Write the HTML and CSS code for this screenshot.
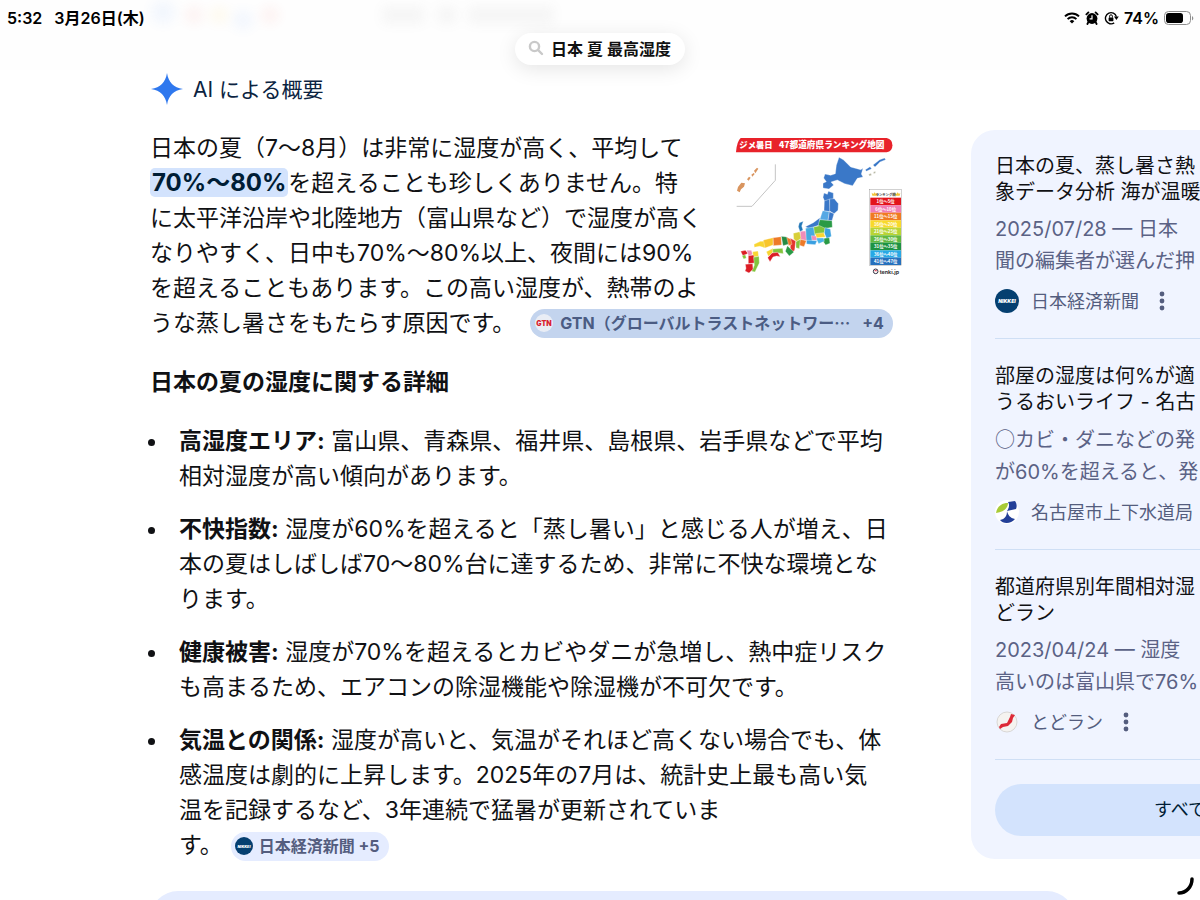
FILE: index.html
```html
<!DOCTYPE html>
<html lang="ja">
<head>
    <meta charset="UTF-8">
    <meta name="viewport" content="width=device-width, initial-scale=1.0">
    <title>日本 夏 最高湿度</title>
    <link rel="stylesheet" href="styles.css">
</head>
<body>
    <header class="topbar">
        <svg class="ghost" viewBox="0 0 600 40" aria-hidden="true">
            <circle cx="163" cy="12" r="12" fill="#4285f4"/>
            <circle cx="194" cy="15" r="9" fill="#ea4335"/>
            <circle cx="219" cy="15" r="9" fill="#fbbc05"/>
            <circle cx="243" cy="20" r="10" fill="#4285f4"/>
            <circle cx="270" cy="15" r="9" fill="#ea4335"/>
            <g fill="#777777">
                <rect x="382" y="6" width="42" height="18"/>
                <rect x="438" y="6" width="18" height="18"/>
                <rect x="468" y="6" width="86" height="18"/>
            </g>
        </svg>
        <div class="status">
            <div class="status-left"><span>5:32</span><span>3月26日(木)</span></div>
            <div class="status-right">
                <svg width="16" height="12" viewBox="0 0 16 12" fill="none" stroke="#000" stroke-width="2">
                    <path d="M1 4.4a10 10 0 0 1 14 0M3.6 7.1a6.2 6.2 0 0 1 8.8 0"/>
                    <path d="M8 11.6 5.7 9.2a3.2 3.2 0 0 1 4.6 0z" fill="#000" stroke="none"/>
                </svg>
                <svg width="14" height="14" viewBox="0 0 14 14">
                    <circle cx="7" cy="7.5" r="5.4"/>
                    <path d="M1.4 3.4 3.4 1.4M10.6 1.4l2 2M3.4 11 2.4 13M10.6 11l1 2" stroke="#000" stroke-width="1.8" stroke-linecap="round"/>
                    <path d="M7 4.2v3.6H4.6" stroke="#fff" stroke-width="1.2" fill="none"/>
                </svg>
                <svg width="15" height="14" viewBox="0 0 15 14" fill="none" stroke="#000" stroke-width="1.4">
                    <path d="M10.2 11.9A5.6 5.6 0 1 1 12.4 5.6"/>
                    <path d="M10 5.6h4.8l-2.4 3.4z" fill="#000" stroke="none"/>
                    <rect x="4.6" y="6.4" width="4.8" height="3.8" rx=".6" fill="#000" stroke="none"/>
                    <path d="M5.6 6.6V5.2a1.4 1.4 0 0 1 2.8 0v1.4" stroke-width="1"/>
                </svg>
                <span>74%</span>
                <svg width="30" height="14" viewBox="0 0 30 14">
                    <rect x=".5" y=".5" width="26" height="13" rx="4" fill="none" stroke="#8e8e8e"/>
                    <rect x="2" y="2" width="17" height="10" rx="2.8"/>
                    <path d="M28 5v4.4c1.8-.8 1.8-3.6 0-4.4z" fill="#8e8e8e"/>
                </svg>
            </div>
        </div>
        <button class="search-pill" type="button">
            <svg width="16" height="16" viewBox="0 0 16 16" fill="none" stroke="#c9c9c9" stroke-width="2.4" stroke-linecap="round">
                <circle cx="6.5" cy="6.5" r="4.6"/>
                <path d="m10.4 10.4 3.6 3.6"/>
            </svg>
            日本 夏 最高湿度
        </button>
    </header>

    <div class="ai-title">
        <svg width="32" height="32" viewBox="0 0 32 32">
            <path d="M16 0c1.6 9.6 6.4 14.4 16 16-9.6 1.6-14.4 6.4-16 16C14.4 22.4 9.6 17.6 0 16 9.6 14.4 14.4 9.6 16 0z" fill="#2f78ee"/>
        </svg>
        <h1>AI による概要</h1>
    </div>

    <div class="layout">
        <main class="answer">
            <svg class="thumb" viewBox="36 24 498 438" role="img" aria-label="都道府県ランキング地図">
                <path d="M50 39H488a22 22 0 0 1 0 43H36q2-32 14-43z" fill="#e8222a"/>
                <g font-family="'Noto Sans CJK JP', sans-serif" font-weight="900" fill="#fff">
                    <text x="46" y="70" font-size="25">ジメ暑日</text>
                    <text x="165" y="70" font-size="26">47都道府県ランキング地図</text>
                </g>
                <path d="M154 118v48l-70 78H38" fill="none" stroke="#c4c4c4" stroke-width="3"/>
                <path d="M42 186l10-13 11 2-3 10-9 8-4 9-8-5zM69 163l6-8 5 3-6 9zM82 149l7-5 3 3-7 8zM90 137l9-9 4 3-9 14z" fill="#d9955f"/>
                <g stroke="#fff" stroke-width="1">
                    <path d="M345 97l13 7 22 22 30 8 7-4-5 17 5 9-17 4-14 22-24-6-22-11-19 6 8 9-14 12-18-3 0-14 10-5-8-11 4-12 17 4 14-5 3-25z" fill="#3a78c8"/>
                    <path d="M424 134l14-9 5 6-16 8zM447 120l20-16 15-5 3 5-17 7-15 15z" fill="#3a78c8"/>
                    <path d="M434 148l7-3 2 6-7 2zM448 141l6-2 1 5-6 2z" fill="#b4b4a0"/>
                    <path d="M300 204l10 4 3-9 15 5 0 18-26 7-5-12z" fill="#3a78c8"/>
                    <path d="M301 228l16-6 1 38-18-2z" fill="#3a78c8"/>
                    <path d="M317 222l14-1 12 15-1 20-12 10-13-8z" fill="#3a78c8"/>
                    <path d="M296 257l20 3-4 27-25-3z" fill="#55a8e4"/>
                    <path d="M316 260l14 6-6 21-12 0z" fill="#3a78c8"/>
                    <path d="M287 284l37 3 1 20-26 4-18-10z" fill="#299a45"/>
                    <path d="M288 278l-5 23-28 10-11-6 24-12z" fill="#3a78c8"/>
                    <path d="M245 310l24-4 5 24-14 24-15-9z" fill="#45aadf"/>
                    <path d="M269 306l18-4 17 8-4 16-28 3z" fill="#82c43c"/>
                    <path d="M303 308l16 4 3 22-14 8-7-18z" fill="#3ba2df"/>
                    <path d="M274 326l25-3 5 13-27 3z" fill="#f8d531"/>
                    <path d="M300 340l16-2 2 17-13 5-8-11z" fill="#299a45"/>
                    <path d="M275 339l24 0 2 10-17 7z" fill="#4bb6e9"/>
                    <path d="M262 332l14 1 3 13-15 0z" fill="#ee8db9"/>
                    <path d="M247 346l32 1-5 12-26-2z" fill="#3a9fe1"/>
                    <path d="M229 319l16-1 2 29-20-4z" fill="#ee8db9"/>
                    <path d="M226 293l12-4-5 14 4 12-9 5-5-15z" fill="#2277b8"/>
                    <path d="M208 325l19-5 4 20-13 10-9-8z" fill="#d8cf3a"/>
                    <path d="M229 343l18 4-7 18-16-5z" fill="#ee7a28"/>
                    <path d="M216 350l13-7-3 28-10-3z" fill="#82c43c"/>
                    <path d="M199 340l16 8-3 28-9 6-4-14z" fill="#e3342e"/>
                    <path d="M172 334l17 2 9 20-21 6z" fill="#258b43"/>
                    <path d="M190 362l13 13 7 6-14 12-12-14z" fill="#299a45"/>
                    <path d="M188 337l12 5 4 16-10 4z" fill="#ee7a28"/>
                    <path d="M147 338l24-3 2 25-25 2z" fill="#ee7a28"/>
                    <path d="M119 345l28-7 0 22-24 9-14-7z" fill="#f8c52b"/>
                    <path d="M90 358l19-9 10 0 4 19-16-4-16 3z" fill="#f8d531"/>
                    <path d="M127 380l20-10 0 12-14 12z" fill="#f8d531"/>
                    <path d="M146 372l30-2 2 16-18-3-13 1z" fill="#82c43c"/>
                    <path d="M131 398l13-14 17-2 8 13-11-2-11 3-9 14z" fill="#dc1c24"/>
                    <path d="M50 379l14-3 8 9-15 8z" fill="#dc1c24"/>
                    <path d="M68 376l14 0 4 12-12 6z" fill="#ee8db9"/>
                    <path d="M86 380l16-2 2 16-17 3z" fill="#f8d531"/>
                    <path d="M73 392l16-2 3 24-19 2z" fill="#dc1c24"/>
                    <path d="M89 397l16-3 1 20-13 27-10-2 8-18z" fill="#82c43c"/>
                    <path d="M64 418l22-2 1 17-12 11-12-6 3-8z" fill="#dc1c24"/>
                    <path d="M54 392l10-3 3 10-8 3z" fill="#82c43c"/>
                </g>
                <rect x="437" y="193" width="96" height="228" fill="#fff" stroke="#777"/>
                <g>
                    <rect x="439" y="218" width="92" height="23" fill="#e3141c"/>
                    <rect x="439" y="241" width="92" height="22" fill="#f07db4"/>
                    <rect x="439" y="263" width="92" height="23" fill="#f07a22"/>
                    <rect x="439" y="286" width="92" height="22" fill="#f8d92b"/>
                    <rect x="439" y="308" width="92" height="23" fill="#b9d435"/>
                    <rect x="439" y="331" width="92" height="22" fill="#62b840"/>
                    <rect x="439" y="353" width="92" height="23" fill="#1d9343"/>
                    <rect x="439" y="376" width="92" height="22" fill="#27a9e5"/>
                    <rect x="439" y="398" width="92" height="22" fill="#2570bd"/>
                </g>
                <path d="M443 203l5 4 4-5 4 5 4-4-2 9h-13zM512 203l5 4 4-5 4 5 4-4-2 9h-13z" fill="#f3c53b"/>
                <g font-family="'Noto Sans CJK JP', sans-serif" font-size="13" font-weight="700" fill="#fff" text-anchor="middle">
                    <text x="485" y="212" font-size="10" fill="#333">ランキング順</text>
                    <text x="485" y="234">1位〜5位</text>
                    <text x="485" y="257">6位〜10位</text>
                    <text x="485" y="279">11位〜15位</text>
                    <text x="485" y="302">16位〜20位</text>
                    <text x="485" y="324">21位〜25位</text>
                    <text x="485" y="347">26位〜30位</text>
                    <text x="485" y="369">31位〜35位</text>
                    <text x="485" y="392">36位〜40位</text>
                    <text x="485" y="414">41位〜47位</text>
                </g>
                <circle cx="455" cy="439" r="7" fill="none" stroke="#334" stroke-width="3"/>
                <path d="M451 439a4 4 0 0 1 8 0" fill="#d45"/>
                <text x="467" y="446" font-family="Inter, sans-serif" font-size="16" font-weight="700" fill="#333">tenki.jp</text>
            </svg>

            <p>日本の夏（7〜8月）は非常に湿度が高く、平均して<br>
            <mark>70%〜80%</mark>を超えることも珍しくありません。特<br>
            に太平洋沿岸や北陸地方（富山県など）で湿度が高く<br>
            なりやすく、日中も70%〜80%以上、夜間には90%<br>
            を超えることもあります。この高い湿度が、熱帯のよ<br>
            うな蒸し暑さをもたらす原因です。<a class="chip chip-active" href="#gtn"><svg width="20" height="20" viewBox="0 0 20 20"><circle cx="10" cy="10" r="9" fill="#e9edf5"/><text x="10" y="13" font-size="7" font-weight="900" font-family="Inter, sans-serif" text-anchor="middle" fill="#d9202f">GTN</text></svg><span>GTN（グローバルトラストネットワー<span class="wide">…</span></span><span class="more">+4</span></a></p>

            <h2>日本の夏の湿度に関する詳細</h2>

            <ul>
                <li><strong>高湿度エリア:</strong> 富山県、青森県、福井県、島根県、岩手県などで平均<br>
                相対湿度が高い傾向があります。</li>
                <li><strong>不快指数:</strong> 湿度が60%を超えると「蒸し暑い」と感じる人が増え、日<br>
                本の夏はしばしば70〜80%台に達するため、非常に不快な環境とな<br>
                ります。</li>
                <li><strong>健康被害:</strong> 湿度が70%を超えるとカビやダニが急増し、熱中症リスク<br>
                も高まるため、エアコンの除湿機能や除湿機が不可欠です。</li>
                <li><strong>気温との関係:</strong> 湿度が高いと、気温がそれほど高くない場合でも、体<br>
                感温度は劇的に上昇します。2025年の7月は、統計史上最も高い気<br>
                温を記録するなど、3年連続で猛暑が更新されていま<br>
                す。<a class="chip" href="#nikkei"><svg width="18" height="18" viewBox="0 0 24 24"><circle cx="12" cy="12" r="12" fill="#053f70"/><text x="12" y="14" font-size="5" font-weight="900" font-style="italic" font-family="Inter, sans-serif" text-anchor="middle" fill="#fff">NIKKEI</text></svg><span>日本経済新聞 +5</span></a></li>
            </ul>
        </main>

        <aside class="sources">
            <article class="source">
                <h3>日本の夏、蒸し暑さ熱<br>象データ分析 海が温暖</h3>
                <p>2025/07/28 — 日本<br>聞の編集者が選んだ押</p>
                <div class="site">
                    <svg width="24" height="24" viewBox="0 0 24 24"><circle cx="12" cy="12" r="12" fill="#053f70"/><text x="12" y="14" font-size="5" font-weight="900" font-style="italic" font-family="Inter, sans-serif" text-anchor="middle" fill="#fff">NIKKEI</text></svg>
                    <span>日本経済新聞</span>
                    <button class="menu" type="button" aria-label="メニュー"><svg width="6" height="20" viewBox="0 0 6 20"><circle cx="3" cy="3" r="2.4"/><circle cx="3" cy="10" r="2.4"/><circle cx="3" cy="17" r="2.4"/></svg></button>
                </div>
            </article>
            <article class="source">
                <h3>部屋の湿度は何%が適<br>うるおいライフ - 名古</h3>
                <p><span class="wide">○</span>カビ・ダニなどの発<br>が60%を超えると、発</p>
                <div class="site">
                    <svg width="24" height="24" viewBox="0 0 24 24"><circle cx="12" cy="12" r="12" fill="#fff"/><path d="M1 13C2 7 6 3 13 3c0 5-4 9-12 10z" fill="#a9cb35"/><path d="M13 2l7-1c2 3 2 6 1 8l-9 2c2-3 3-6 1-9z" fill="#233f98"/><path d="M12 11c1 4 3 7 8 8-4 5-12 5-15 1 5-1 7-4 7-9z" fill="#233f98"/></svg>
                    <span>名古屋市上下水道局</span>
                </div>
            </article>
            <article class="source">
                <h3>都道府県別年間相対湿<br>どラン</h3>
                <p>2023/04/24 — 湿度<br>高いのは富山県で76%</p>
                <div class="site">
                    <svg width="24" height="24" viewBox="0 0 24 24"><circle cx="12" cy="12" r="10" fill="#f5f3f0" stroke="#d9d7d5"/><path d="M4 17l2-3 6-1 3-6 1-3 4 1-2 3-1 4-4 4-5 1-3 2z" fill="#dd2937"/></svg>
                    <span>とどラン</span>
                    <button class="menu" type="button" aria-label="メニュー"><svg width="6" height="20" viewBox="0 0 6 20"><circle cx="3" cy="3" r="2.4"/><circle cx="3" cy="10" r="2.4"/><circle cx="3" cy="17" r="2.4"/></svg></button>
                </div>
            </article>
            <button class="show-all" type="button">すべて表示</button>
        </aside>
    </div>

    <div class="next-card"></div>

    <svg class="spinner" width="20" height="20" viewBox="0 0 20 20" aria-hidden="true">
        <path d="M2 17C9 17 15 11 15 3" fill="none" stroke="#000" stroke-width="3.5" stroke-linecap="round"/>
    </svg>
</body>
</html>
```
FILE: styles.css
```css
* {
    margin: 0;
    padding: 0;
    box-sizing: border-box;
}

body {
    height: 100vh;
    overflow: hidden;
    background: #fff;
    color: #101114;
    font-family: Inter, "Noto Sans CJK JP", sans-serif;
    font-size: 23px;
    line-height: 35px;
}

button {
    border: none;
    background: none;
    font-family: inherit;
    cursor: pointer;
}

a {
    text-decoration: none;
}

svg {
    flex-shrink: 0;
}

/* Top bar */
.topbar {
    position: relative;
    display: flex;
    flex-direction: column;
    align-items: center;
    height: 70px;
    background: #fefefe;
}

.ghost {
    position: absolute;
    top: 0;
    left: 0;
    width: 600px;
    height: 40px;
    opacity: 0.06;
    filter: blur(6px);
}

.status {
    display: flex;
    justify-content: space-between;
    width: 100%;
    height: 33px;
    padding: 3px 6px 0 7px;
    color: #000;
    font-size: 16px;
    font-weight: 600;
    line-height: 30px;
}

.status-left,
.status-right {
    display: flex;
    align-items: center;
}

.status-left {
    gap: 12px;
}

.status-right {
    gap: 5px;
}

.search-pill {
    position: relative;
    display: flex;
    align-items: center;
    gap: 7px;
    height: 32px;
    padding: 0 14px 2px 13px;
    border-radius: 16px;
    background: #fff;
    box-shadow: 0 4px 20px rgba(0, 0, 0, 0.1);
    color: #111;
    font-size: 16px;
    font-weight: 600;
}

/* AI answer */
.ai-title {
    display: flex;
    align-items: center;
    gap: 10px;
    height: 38px;
    margin: 0 0 22px 151px;
}

.ai-title h1 {
    color: #0b2340;
    font-size: 21px;
    font-weight: 400;
}

.layout {
    display: grid;
    grid-template-columns: minmax(0, 1fr) 454px;
    align-items: start;
    gap: 69px;
    margin: 0 -225px 0 150px;
}

.answer {
    padding-top: 1px;
    white-space: nowrap;
}

.thumb {
    float: right;
    width: 166px;
    height: 146px;
    margin-top: 2px;
}

mark {
    padding: 0 2px;
    border-radius: 5px;
    background: #d3e3fd;
    color: #001d35;
    font-size: 24px;
    font-weight: 700;
    line-height: 24px;
}

.chip {
    display: inline-flex;
    align-items: center;
    gap: 6px;
    height: 29px;
    margin-left: 8px;
    padding: 0 9px 0 4px;
    border-radius: 15px;
    background: #e5ecff;
    color: #545d7e;
    font-size: 16px;
    font-weight: 700;
    line-height: 29px;
    vertical-align: -2px;
}

.chip-active {
    margin-left: 15px;
    background: #c3d4ee;
    color: #4b5c83;
}

.wide {
    font-family: "Noto Sans CJK JP", sans-serif;
}

.chip-active .more {
    margin-left: 6px;
}

h2 {
    margin: 24px 0;
    font-size: 23px;
    font-weight: 700;
    line-height: 35px;
}

ul {
    padding-left: 19px;
}

li {
    margin-bottom: 18px;
    padding-left: 10px;
}

li:last-child {
    margin-bottom: 0;
}

/* Source panel */
.sources {
    padding: 23px 24px;
    border-radius: 24px;
    background: #f0f4ff;
    white-space: nowrap;
}

.source {
    margin-bottom: 24px;
    padding-bottom: 25px;
    border-bottom: 1px solid #cfdff5;
}

.source h3 {
    margin-bottom: 8px;
    font-size: 20px;
    font-weight: 400;
    line-height: 26px;
}

.source p {
    margin-bottom: 12px;
    color: #5b6285;
    font-size: 20px;
    line-height: 32px;
}

.site {
    display: flex;
    align-items: center;
    height: 24px;
    color: #545d7e;
    font-size: 18px;
}

.site span {
    margin: 0 20px 0 12px;
}

.menu {
    display: flex;
}

.menu svg {
    fill: #545d7e;
}

.show-all {
    display: block;
    width: 100%;
    height: 52px;
    padding-bottom: 4px;
    border-radius: 26px;
    background: #d3e3fd;
    color: #001d35;
    font-size: 18px;
}

.next-card {
    height: 80px;
    margin: 28px 125px 0 150px;
    border-radius: 28px;
    background: #e5ecff;
}

.spinner {
    position: fixed;
    right: 3px;
    bottom: 4px;
}
```
